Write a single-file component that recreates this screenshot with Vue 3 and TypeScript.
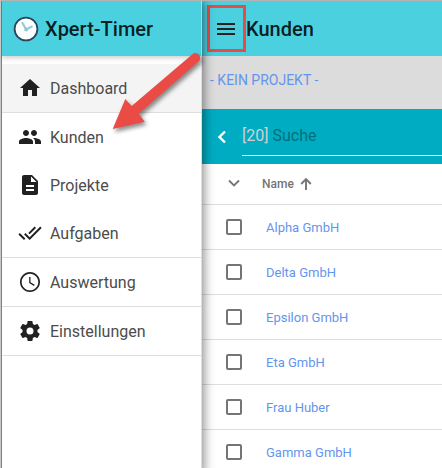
<script setup lang="ts">
import { ref } from 'vue'

interface NavItem {
  label: string
  icon: string
  divider: boolean
  active?: boolean
}

const navItems: NavItem[] = [
  { label: 'Dashboard', icon: 'M10 20v-6h4v6h5v-8h3L12 3 2 12h3v8z', divider: true, active: true },
  {
    label: 'Kunden',
    icon: 'M16 11c1.66 0 2.99-1.34 2.99-3S17.66 5 16 5s-3 1.34-3 3 1.34 3 3 3zm-8 0c1.66 0 2.99-1.34 2.99-3S9.66 5 8 5 5 6.34 5 8s1.34 3 3 3zm0 2c-2.33 0-7 1.17-7 3.5V19h14v-2.500C15 14.170 10.330 13 8 13zm8 0c-.29 0-.62.02-.97.05 1.160.840 1.970 1.970 1.970 3.450V19h6v-2.500c0-2.330-4.670-3.500-7-3.500z',
    divider: false,
  },
  {
    label: 'Projekte',
    icon: 'M14 2H6c-1.100 0-1.990.9-1.990 2L4 20c0 1.100.89 2 1.990 2H18c1.100 0 2-.9 2-2V8l-6-6zm2 16H8v-2h8v2zm0-4H8v-2h8v2zm-3-5V3.500L18.500 9H13z',
    divider: false,
  },
  {
    label: 'Aufgaben',
    icon: 'M18 7l-1.410-1.410-6.340 6.340 1.410 1.410L18 7zm4.240-1.410L11.660 16.170 7.480 12l-1.410 1.410L11.660 19l12-12-1.420-1.410zM.41 13.410L6 19l1.410-1.410L1.830 12 .41 13.410z',
    divider: true,
  },
  {
    label: 'Auswertung',
    icon: 'M11.990 2C6.470 2 2 6.480 2 12s4.470 10 9.990 10C17.520 22 22 17.520 22 12S17.520 2 11.990 2zM12 20.300c-4.580 0-8.300-3.720-8.300-8.300s3.720-8.300 8.300-8.300 8.300 3.720 8.300 8.300-3.720 8.300-8.300 8.300zM12.500 7H11.200v6l4.700 3.100.75-1.230-4.150-2.670z',
    divider: true,
  },
  {
    label: 'Einstellungen',
    icon: 'M12 15.500A3.500 3.500 0 0 1 8.500 12 3.500 3.500 0 0 1 12 8.500a3.500 3.500 0 0 1 3.500 3.500 3.500 3.500 0 0 1-3.500 3.500m7.430-2.530c.04-.32.07-.64.07-.97 0-.33-.03-.66-.07-1l2.110-1.630c.19-.15.24-.42.12-.64l-2-3.460c-.12-.22-.39-.31-.61-.22l-2.490 1c-.52-.39-1.060-.73-1.690-.98l-.37-2.650A.506.506 0 0 0 14 2h-4c-.25 0-.46.18-.5.42l-.37 2.650c-.63.25-1.170.59-1.690.98l-2.490-1c-.22-.09-.49 0-.61.22l-2 3.460c-.13.22-.07.49.12.64L4.570 11c-.04.34-.07.67-.07 1 0 .33.03.65.07.97l-2.110 1.660c-.19.15-.25.42-.12.64l2 3.460c.12.22.39.3.61.22l2.490-1.010c.52.4 1.060.74 1.690.99l.37 2.650c.04.24.25.42.5.42h4c.25 0 .46-.18.5-.42l.37-2.650c.63-.26 1.170-.59 1.690-.99l2.490 1.010c.22.08.49 0 .61-.22l2-3.460c.12-.22.07-.49-.12-.64l-2.110-1.660z',
    divider: true,
  },
]

const customers = ref<string[]>([
  'Alpha GmbH',
  'Delta GmbH',
  'Epsilon GmbH',
  'Eta GmbH',
  'Frau Huber',
  'Gamma GmbH',
])
const selected = ref<string[]>([])
const query = ref('')
</script>

<template>
  <div class="app">
    <aside class="drawer">
      <header class="bar brand">
        <svg class="logo" viewBox="0 0 26 26" aria-hidden="true">
          <circle cx="13" cy="13" r="11.400" fill="#fdfefe" stroke="#2b4560" stroke-width="1.800" />
          <path d="M9 6.300l4.200 7.200 6.300-3.300" fill="none" stroke="#8fcbd2" stroke-width="2" />
          <circle cx="13.200" cy="13.500" r="2" fill="#8fcbd2" />
        </svg>
        <span>Xpert-Timer</span>
      </header>
      <nav class="nav">
        <a
          v-for="item in navItems"
          :key="item.label"
          href="#"
          class="nav-item"
          :class="{ divided: item.divider, active: item.active }"
        >
          <svg class="icon" viewBox="0 0 24 24" aria-hidden="true"><path :d="item.icon" /></svg>
          <span>{{ item.label }}</span>
        </a>
      </nav>
    </aside>

    <main class="main">
      <header class="bar title-bar">
        <button class="menu" type="button" aria-label="Menü">
          <svg class="icon" viewBox="0 0 24 24" aria-hidden="true"><path d="M3 18h18v-2H3v2zm0-5h18v-2H3v2zm0-7v2h18V6H3z" /></svg>
        </button>
        <h1>Kunden</h1>
      </header>
      <div class="project"><a href="#">- KEIN PROJEKT -</a></div>
      <div class="search">
        <button class="back" type="button" aria-label="Zurück">
          <svg viewBox="0 0 24 24" aria-hidden="true"><path d="M15 6.500L9.500 12l5.500 5.500" /></svg>
        </button>
        <div class="field">
          <label for="search">[20]</label>
          <input id="search" v-model="query" type="text" placeholder="Suche" />
        </div>
      </div>
      <table class="list">
        <thead>
          <tr>
            <th class="pick">
              <button type="button" aria-label="Auswahl">
                <svg class="chevron" viewBox="0 0 16 16" aria-hidden="true"><path d="M3 5.500l5 5 5-5" /></svg>
              </button>
            </th>
            <th class="name">
              <button type="button">
                Name
                <svg class="arrow" viewBox="0 0 16 16" aria-hidden="true"><path d="M8 14V3.500M3.200 8L8 3.200 12.800 8" /></svg>
              </button>
            </th>
          </tr>
        </thead>
        <tbody>
          <tr v-for="customer in customers" :key="customer">
            <td class="pick"><input v-model="selected" type="checkbox" :value="customer" :aria-label="customer" /></td>
            <td class="name"><a href="#">{{ customer }}</a></td>
          </tr>
        </tbody>
      </table>
    </main>

    <svg class="pointer" viewBox="0 0 100 90" aria-hidden="true">
      <path d="M90.700 7.100A4.700 4.700 0 0 1 96.700 14.300L36.700 66.700l6 8L10.700 82l12.600-30 6.400 7z" />
    </svg>
  </div>
</template>

<style>
body {
  margin: 0;
  background: #fff;
}
</style>

<style scoped>
.app {
  position: relative;
  display: grid;
  grid-template-columns: 201px 1fr;
  box-sizing: border-box;
  height: 100vh;
  overflow: hidden;
  border-top: 1px solid #b4b4b4;
  border-left: 1px solid #c8c8c8;
  background: #fff;
  font-family: Roboto, "Liberation Sans", sans-serif;
}
.drawer {
  z-index: 1;
  border-left: 1px solid #808080;
  border-right: 1px solid #dedede;
  background: #fff;
  box-shadow: 2px 0 10px rgba(0, 0, 0, 0.45);
}
.bar {
  display: flex;
  align-items: center;
  box-sizing: border-box;
  height: 55px;
  background: #4bd0e0;
  color: rgba(0, 0, 0, 0.87);
  font-size: 20px;
  font-weight: 500;
  line-height: 24px;
}
.brand {
  gap: 6px;
  padding-left: 11px;
  box-shadow: 0 2px 5px rgba(0, 0, 0, 0.2);
}
.logo {
  width: 26px;
  height: 26px;
}
.icon {
  display: block;
  width: 24px;
  height: 24px;
  fill: #212121;
}
.nav {
  padding-top: 8px;
}
.nav-item {
  display: flex;
  align-items: center;
  gap: 8px;
  height: 48px;
  padding-left: 16px;
  color: #4c4c4c;
  font-size: 16px;
  text-decoration: none;
}
.divided {
  border-bottom: 1px solid #dedede;
}
.active {
  background: #f4f4f4;
}
button {
  padding: 0;
  border: 0;
  background: none;
  color: inherit;
  font: inherit;
}
.title-bar {
  padding-left: 5px;
}
.menu {
  display: flex;
  align-items: center;
  box-sizing: border-box;
  width: 39px;
  height: 47px;
  padding-left: 4px;
  border: 3px solid #ea4b45;
}
h1 {
  margin: 0;
  font-size: 20px;
  font-weight: 500;
}
.project {
  display: flex;
  align-items: center;
  box-sizing: border-box;
  height: 53px;
  padding: 0 8px 6px;
  background: #dcdcdc;
  font-size: 14px;
}
a {
  color: #6495ed;
  text-decoration: none;
}
.search {
  display: flex;
  height: 55px;
  padding-left: 8px;
  background: #00acc1;
}
.back {
  width: 24px;
  margin-right: 8px;
}
.back svg {
  display: block;
  width: 24px;
  height: 24px;
  fill: none;
  stroke: #fff;
  stroke-width: 2.400;
}
.field {
  display: flex;
  flex: 1;
  align-items: center;
  gap: 4px;
  min-width: 0;
  height: 47px;
  box-sizing: border-box;
  padding-top: 7px;
  border-bottom: 1px solid #fff;
  color: #d0d0d0;
  font-size: 16px;
}
.field input {
  flex: 1;
  min-width: 0;
  padding: 0;
  border: 0;
  outline: 0;
  background: none;
  color: #fff;
  font: inherit;
}
.field input::placeholder {
  color: #00707e;
  opacity: 1;
}
.list {
  width: 100%;
  border-collapse: separate;
  border-spacing: 0;
}
th,
td {
  box-sizing: border-box;
  height: 45px;
  padding: 0;
  border-bottom: 1px solid #dedede;
  text-align: left;
}
th {
  height: 41px;
  color: #757575;
  font-size: 12px;
  font-weight: 500;
}
td {
  font-size: 13px;
}
.pick {
  width: 60px;
  padding-left: 24px;
}
td.name {
  padding-left: 4px;
}
.name button {
  display: flex;
  align-items: center;
  gap: 4px;
}
.chevron,
.arrow {
  display: block;
  width: 16px;
  height: 16px;
  fill: none;
  stroke: #757575;
  stroke-width: 1.900;
}
.pick input {
  appearance: none;
  display: block;
  box-sizing: border-box;
  width: 16px;
  height: 16px;
  margin: 0;
  border: 2px solid #757575;
  border-radius: 2px;
}
.pick input:checked {
  background: #00acc1;
}
.pointer {
  position: absolute;
  z-index: 2;
  top: 46px;
  left: 101px;
  width: 100px;
  height: 90px;
  fill: #ea4b45;
  filter: drop-shadow(2px 3px 2px rgba(0, 0, 0, 0.45));
  pointer-events: none;
}
</style>
